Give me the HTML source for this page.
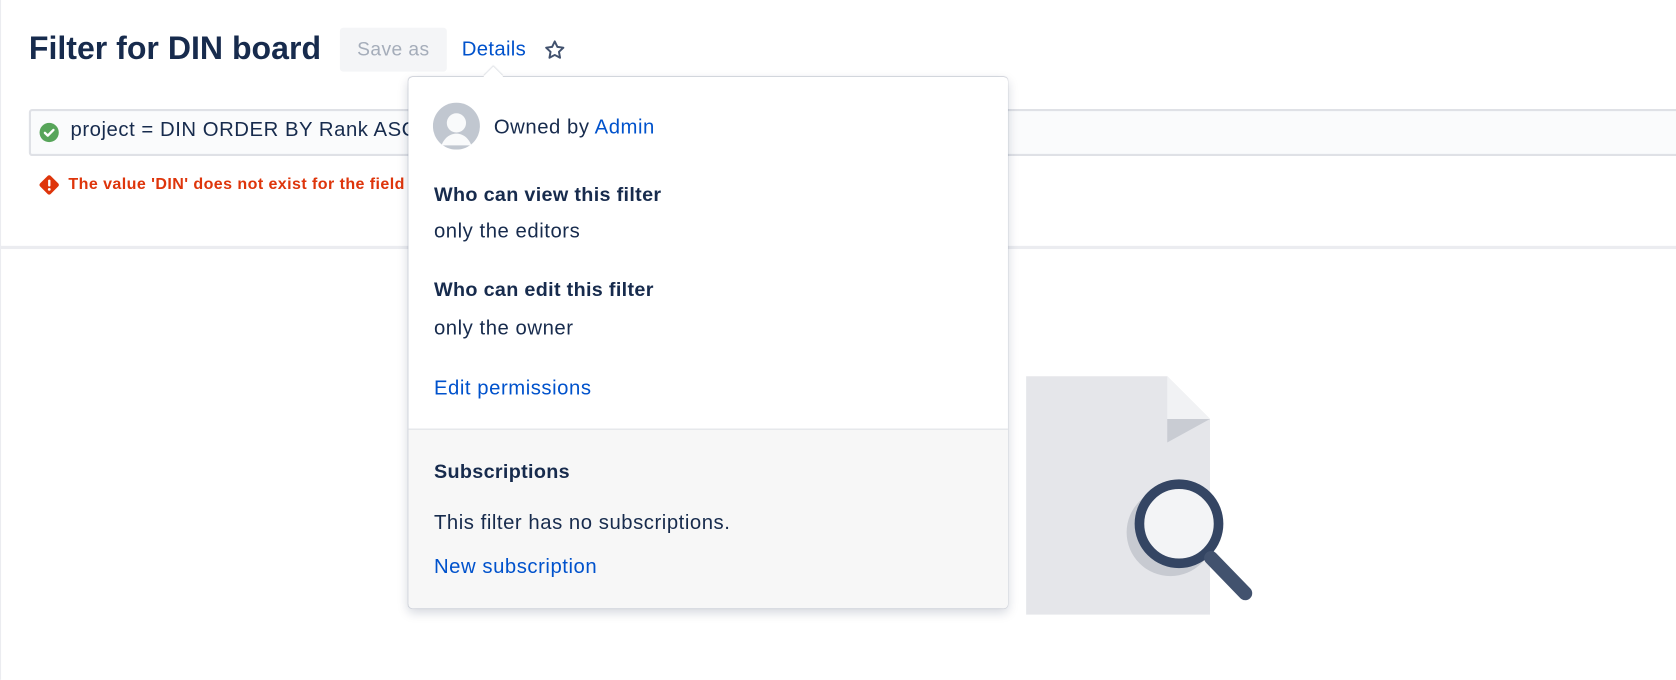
<!DOCTYPE html>
<html><head><meta charset="utf-8"><style>
html,body{margin:0;padding:0;background:#fff;overflow:hidden;width:1676px;height:680px}
#w{position:absolute;left:0;top:0;width:1568px;height:636px;transform:scale(1.0689);transform-origin:0 0;font-family:"Liberation Sans",sans-serif;color:#172B4D}
.a{position:absolute;white-space:nowrap}
.t{font-size:19px;letter-spacing:0.5px}
.b{font-size:18.5px;font-weight:bold;letter-spacing:0.3px}
</style></head><body><div id="w">
<div class="a" style="left:0;top:0;width:1px;height:636px;background:#EBECF0"></div>
<div class="a" style="left:27px;top:29px;font-size:30px;font-weight:600;letter-spacing:0px">Filter for DIN board</div>
<div class="a" style="left:318px;top:26px;width:100px;height:41px;background:#F4F5F7;border-radius:3px;color:#A5ADBA;font-size:18px;letter-spacing:0.4px;line-height:41px;text-align:center">Save as</div>
<div class="a" style="left:432px;top:36px;font-size:19px;letter-spacing:0.3px;color:#0052CC">Details</div>
<svg class="a" style="left:508px;top:36px" width="22" height="22" viewBox="0 0 24 24"><path d="M12 3l2.7 5.6 6.1.8-4.5 4.2 1.1 6.1L12 16.8l-5.4 2.9 1.1-6.1-4.5-4.2 6.1-.8z" fill="none" stroke="#42526E" stroke-width="2" stroke-linejoin="round"/></svg>
<div class="a" style="left:27px;top:102px;width:1560px;height:40px;background:#FAFBFC;border:2px solid #DFE1E6;border-radius:3px"></div>
<svg class="a" style="left:36px;top:114px" width="20" height="20" viewBox="0 0 20 20"><circle cx="10" cy="10" r="9" fill="#57A55A"/><path d="M6 10.3l2.7 2.6L14 7.6" fill="none" stroke="#fff" stroke-width="2.2" stroke-linecap="round" stroke-linejoin="round"/></svg>
<div class="a t" style="left:66px;top:111px">project = DIN ORDER BY Rank ASC</div>
<svg class="a" style="left:36px;top:163px" width="20" height="20" viewBox="0 0 20 20"><rect x="3" y="3" width="14" height="14" rx="2" transform="rotate(45 10 10)" fill="#DE350B"/><rect x="9" y="5" width="2.2" height="6.5" rx="1" fill="#fff"/><circle cx="10.1" cy="14.2" r="1.3" fill="#fff"/></svg>
<div class="a" style="left:64px;top:164px;font-size:15px;letter-spacing:0.4px;font-weight:bold;color:#DE350B">The value 'DIN' does not exist for the field</div>
<div class="a" style="left:0;top:230px;width:1568px;height:3px;background:#EBECF0"></div>
<svg class="a" style="left:955px;top:345px" width="230" height="235" viewBox="955 345 230 235">
<path d="M960 352H1092L1132 392V575H960Z" fill="#E5E6EA"/>
<path d="M1092 352L1132 392H1092Z" fill="#F1F2F4"/>
<path d="M1092 392H1132L1092 414Z" fill="#C9CCD3"/>
<circle cx="1095" cy="498" r="41" fill="#C7CAD1"/>
<circle cx="1103" cy="490" r="37" fill="#F3F4F6" stroke="#344563" stroke-width="9"/>
<path d="M1133 522L1165 555" stroke="#42526E" stroke-width="13" stroke-linecap="round"/>
</svg>
<div class="a" style="left:382px;top:72px;width:561px;height:497px;background:#fff;border-radius:4px;box-shadow:0 4px 10px rgba(9,30,66,.18),0 0 1px rgba(9,30,66,.3);overflow:hidden">
<div class="a" style="left:0;top:329px;width:561px;height:168px;background:#F7F7F7;border-top:1px solid #DFE1E6"></div>
<svg class="a" style="left:23px;top:24px" width="44" height="44" viewBox="0 0 44 44"><circle cx="22" cy="22" r="22" fill="#C1C7D0"/><circle cx="22" cy="19" r="9" fill="#fff" opacity=".9"/><path d="M8 40c3-8 9-11 14-11s11 3 14 11" fill="#fff" opacity=".9"/></svg>
<div class="a t" style="left:80px;top:37px">Owned by <span style="color:#0052CC">Admin</span></div>
<div class="a b" style="left:24px;top:99px">Who can view this filter</div>
<div class="a t" style="left:24px;top:134px">only the editors</div>
<div class="a b" style="left:24px;top:188px">Who can edit this filter</div>
<div class="a t" style="left:24px;top:225px">only the owner</div>
<div class="a t" style="left:24px;top:281px;color:#0052CC">Edit permissions</div>
<div class="a b" style="left:24px;top:358px">Subscriptions</div>
<div class="a t" style="left:24px;top:407px">This filter has no subscriptions.</div>
<div class="a t" style="left:24px;top:448px;color:#0052CC">New subscription</div>
</div>
<div class="a" style="left:455px;top:65px;width:13px;height:13px;background:#fff;transform:rotate(45deg);box-shadow:-1px -1px 1px rgba(9,30,66,.12)"></div>
</div></body></html>
